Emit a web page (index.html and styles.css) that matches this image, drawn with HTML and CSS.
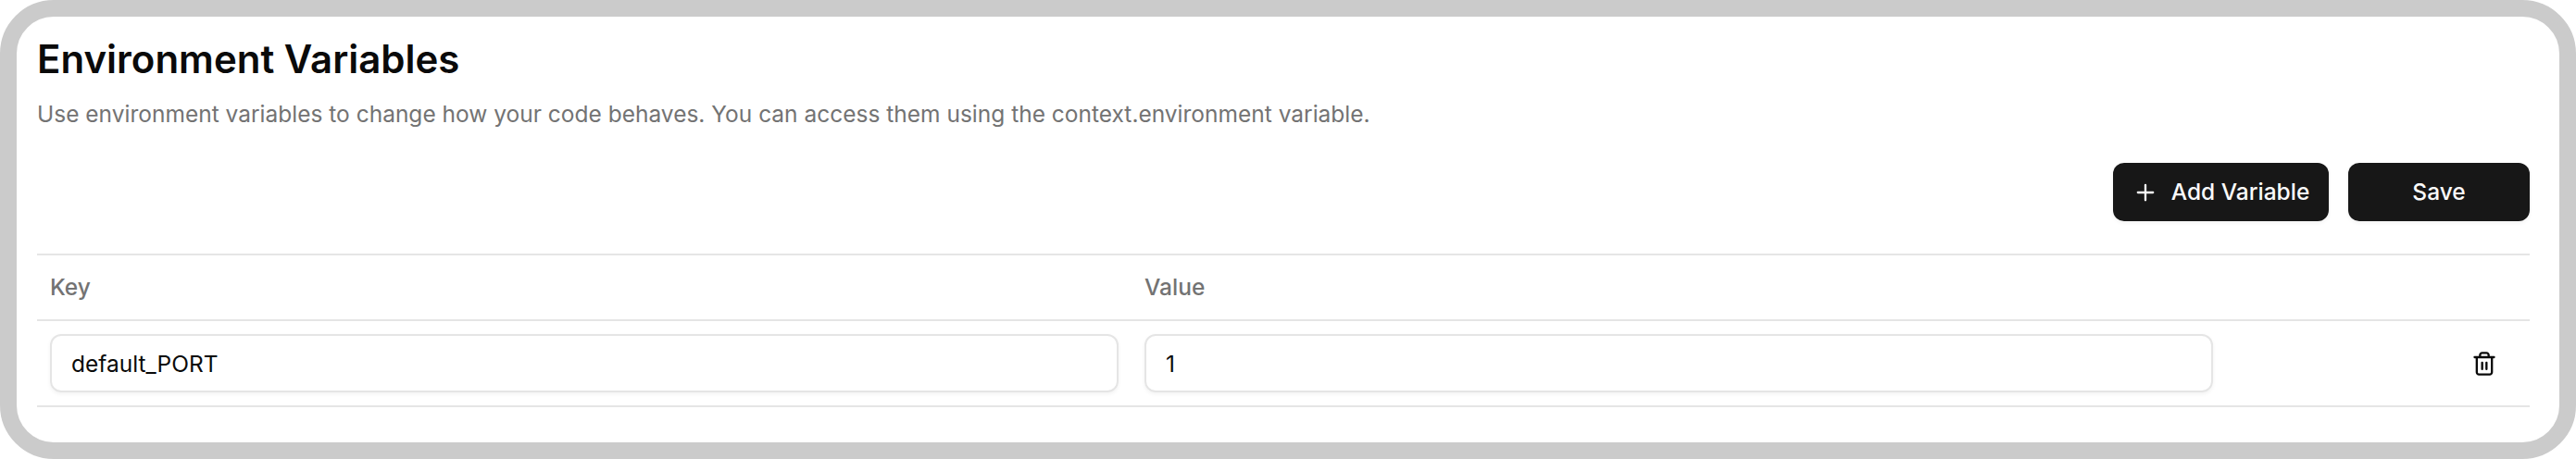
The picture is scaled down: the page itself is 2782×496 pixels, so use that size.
FILE: index.html
```html
<!DOCTYPE html>
<html lang="en">
<head>
<meta charset="utf-8">
<title>Environment Variables</title>
<link rel="stylesheet" href="styles.css">
</head>
<body>
<main class="panel">
  <h1 class="title">Environment Variables</h1>
  <p class="description">Use environment variables to change how your code behaves. You can access them using the context.environment variable.</p>
  <div class="actions">
    <button class="button button-add" type="button">
      <svg class="icon" viewBox="0 0 24 24"><path d="M5 12h14M12 5v14"/></svg>
      <span>Add Variable</span>
    </button>
    <button class="button button-save" type="button">Save</button>
  </div>
  <section class="table">
    <div class="row row-head">
      <div class="cell">Key</div>
      <div class="cell">Value</div>
      <div class="cell"></div>
    </div>
    <div class="row">
      <div class="cell"><input class="input" type="text" value="default_PORT" aria-label="Key"></div>
      <div class="cell"><input class="input" type="text" value="1" aria-label="Value"></div>
      <div class="cell cell-action">
        <button class="icon-button" type="button" aria-label="Delete">
          <svg class="icon" viewBox="0 0 24 24"><path d="M3 6h18M19 6v14c0 1-1 2-2 2H7c-1 0-2-1-2-2V6M8 6V4c0-1 1-2 2-2h4c1 0 2 1 2 2v2M10 11v6M14 11v6"/></svg>
        </button>
      </div>
    </div>
  </section>
</main>
</body>
</html>
```

FILE: styles.css
```css
* {
  box-sizing: border-box;
}

body {
  margin: 0;
  background: #fff;
  color: #0a0a0a;
  font-family: Inter, "Liberation Sans", sans-serif;
  font-size: 24.5px;
  line-height: 35px;
}

.panel {
  height: 496px;
  padding: 21px 32px 0 22px;
  border: 18px solid #cbcbcb;
  border-radius: 58px;
  background: #fff;
}

.title {
  margin: 0;
  font-size: 42px;
  line-height: 49px;
  font-weight: 600;
}

.description {
  margin: 18px 0 0;
  color: #737373;
}

.actions {
  display: flex;
  justify-content: flex-end;
  gap: 21px;
  margin-top: 35px;
}

.button {
  display: flex;
  align-items: center;
  justify-content: center;
  gap: 14px;
  height: 63px;
  padding: 0 20px;
  border: 0;
  border-radius: 12px;
  background: #171717;
  box-shadow: 0 2px 4px rgba(0, 0, 0, 0.05);
  color: #fafafa;
  font: inherit;
  font-weight: 500;
}

.button-add {
  width: 233px;
}

.button-save {
  width: 196px;
}

.icon {
  display: block;
  flex: none;
  width: 28px;
  height: 28px;
  fill: none;
  stroke: currentColor;
  stroke-width: 2;
  stroke-linecap: round;
  stroke-linejoin: round;
}

.table {
  margin-top: 35px;
  border-top: 2px solid #e5e5e5;
}

.row {
  display: grid;
  grid-template-columns: 1182px 1182px 1fr;
  align-items: center;
  height: 93px;
  border-bottom: 2px solid #e5e5e5;
}

.row-head {
  height: 71px;
  color: #737373;
  font-weight: 500;
}

.cell {
  padding: 0 14px;
}

.cell-action {
  display: flex;
  justify-content: flex-end;
}

.input {
  display: block;
  width: 100%;
  height: 63px;
  padding: 0 21px;
  border: 2px solid #e5e5e5;
  border-radius: 12px;
  background: transparent;
  box-shadow: 0 2px 4px rgba(0, 0, 0, 0.05);
  color: inherit;
  font: inherit;
}

.icon-button {
  padding: 14px 21px;
  border: 0;
  background: transparent;
  color: inherit;
}
```
